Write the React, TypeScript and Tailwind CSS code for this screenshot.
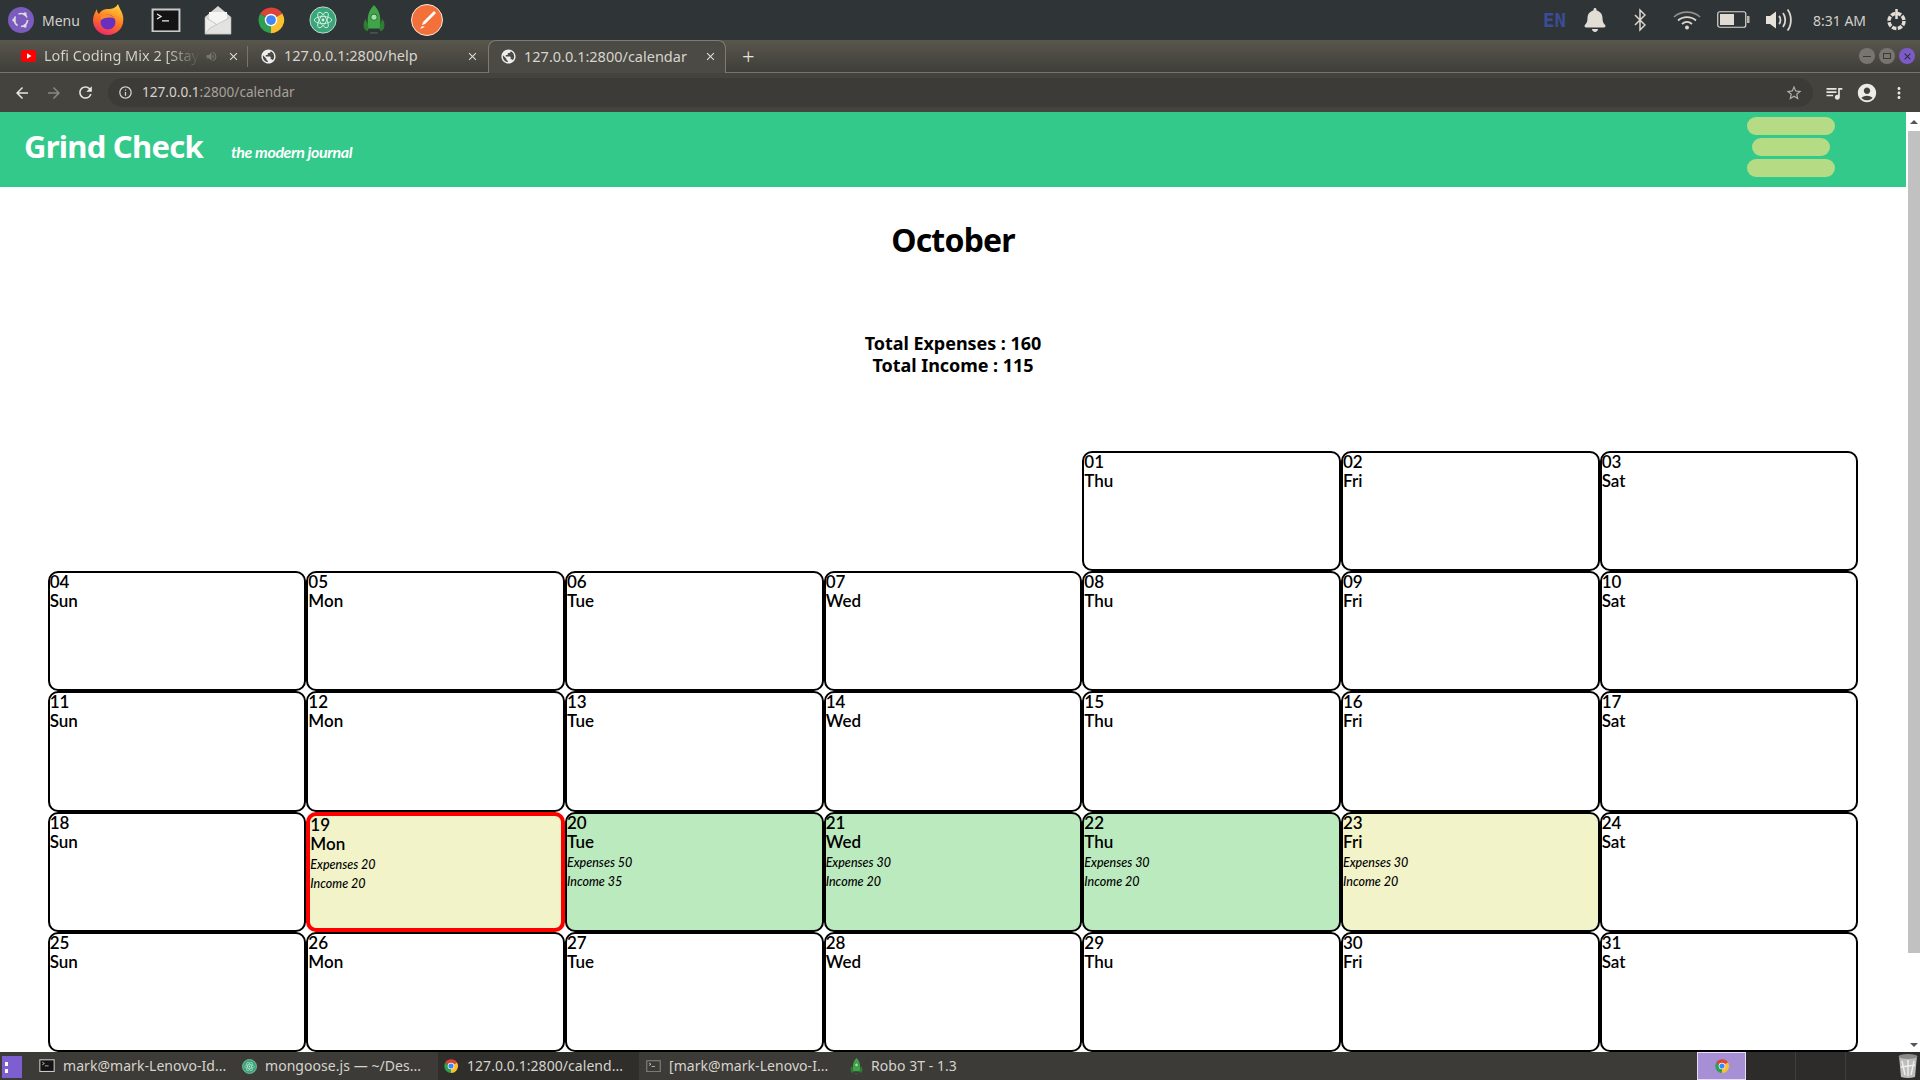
import React from 'react';
import { FaBell } from 'react-icons/fa';
import {
  MdAccountCircle,
  MdArrowBack,
  MdArrowForward,
  MdClose,
  MdInfoOutline,
  MdMoreVert,
  MdPublic,
  MdQueueMusic,
  MdRefresh,
  MdStarBorder,
  MdVolumeUp,
} from 'react-icons/md';

const Chrome: React.FC<{ size: number }> = ({ size }) => (
  <svg width={size} height={size} viewBox="0 0 48 48" className="shrink-0">
    <path d="M24 24 L6.5 14 A21 21 0 0 1 42.2 13.5 Z" fill="#db4437" />
    <path d="M24 24 L42.2 13.5 A21 21 0 0 1 24 45 Z" fill="#fbc02d" />
    <path d="M24 24 L24 45 A21 21 0 0 1 6.5 14 Z" fill="#2e9e4f" />
    <circle cx="24" cy="24" r="10" fill="#fff" />
    <circle cx="24" cy="24" r="7.8" fill="#4285f4" />
  </svg>
);

const Atom: React.FC<{ size: number }> = ({ size }) => (
  <svg width={size} height={size} viewBox="0 0 32 32" className="shrink-0">
    <circle cx="16" cy="16" r="15" fill="#3aa57a" stroke="#cfe8da" strokeWidth="1" />
    <g fill="none" stroke="#d6f3e2" strokeWidth="1">
      <ellipse cx="16" cy="16" rx="10" ry="4" />
      <ellipse cx="16" cy="16" rx="10" ry="4" transform="rotate(60 16 16)" />
      <ellipse cx="16" cy="16" rx="10" ry="4" transform="rotate(120 16 16)" />
    </g>
    <circle cx="16" cy="16" r="1.6" fill="#d6f3e2" />
  </svg>
);

const Rocket: React.FC<{ w: number; h: number }> = ({ w, h }) => (
  <svg width={w} height={h} viewBox="0 0 24 32" className="shrink-0">
    <path d="M3 15 C-1 21 1 27 5 28 L7 24 Z M21 15 C25 21 23 27 19 28 L17 24 Z" fill="#2f7d32" />
    <path d="M12 0 C6 6 4 13 6 25 L18 25 C20 13 18 6 12 0 Z" fill="#3fa548" />
    <circle cx="12" cy="13" r="3.4" fill="#a7dcae" stroke="#1f6b28" />
    <rect x="8" y="29" width="8" height="1.5" fill="#555" />
  </svg>
);

const Terminal: React.FC<{ size: number; dim?: boolean }> = ({ size, dim }) => (
  <svg width={size} height={size * 0.83} viewBox="0 0 30 25" className="shrink-0">
    <rect x="0.5" y="0.5" width="29" height="24" fill={dim ? '#8b8b88' : '#c9c9c9'} />
    <rect x="2.5" y="2.5" width="25" height="20" fill={dim ? '#3b3a36' : '#141414'} />
    <path d="M6 6 L10 8.5 L6 11 M11 13 H18" fill="none" stroke="#eee" strokeWidth="1.3" />
  </svg>
);

const Mail = () => (
  <svg width="28" height="30" viewBox="0 0 28 30">
    <path d="M1 12 L14 1 L27 12 V29 H1 Z" fill="#d8d8d6" />
    <path d="M5 14 L5 7 L23 7 L23 14 L14 20 Z" fill="#f5f5f3" />
    <path d="M1 12 L27 29 H1 Z" fill="#eeeeec" stroke="#b5b5b3" strokeWidth="0.6" />
    <path d="M27 12 L6 23 L1 29 H27 Z" fill="#e2e2e0" stroke="#b5b5b3" strokeWidth="0.6" />
  </svg>
);

const Firefox = () => (
  <svg width="31" height="32" viewBox="0 0 31 32">
    <defs>
      <linearGradient id="fx" x1="0.7" y1="0" x2="0.3" y2="1">
        <stop offset="0" stopColor="#ffd33d" />
        <stop offset="0.5" stopColor="#ff7a1f" />
        <stop offset="1" stopColor="#f0256a" />
      </linearGradient>
    </defs>
    <path d="M25 0 C26 4 29 7 30 12 C32 24 24 31 15 31 C6 31 0 24 0 16 C0 12 2 8 4 5 C4 8 5 9 6 10 C8 6 12 5 15 5 C19 5 23 4 25 0 Z" fill="url(#fx)" />
    <circle cx="15" cy="18" r="7.5" fill="#6b2fc0" />
    <path d="M8 12 C12 9 19 10 22 15 C18 13 13 13 8 16 Z" fill="#ff8a2a" />
  </svg>
);

const Postman = () => (
  <svg width="32" height="32" viewBox="0 0 32 32">
    <circle cx="16" cy="16" r="15.5" fill="#f4703a" stroke="#f6e8df" strokeWidth="1" />
    <path d="M23 7 L25 9 L14 20 L11 21 L12 18 Z M11 22 L14 23 L9 25 Z" fill="#fff" />
  </svg>
);

const UbuntuMenu = () => (
  <svg width="26" height="26" viewBox="0 0 26 26">
    <circle cx="13" cy="13" r="13" fill="#7c5bbe" />
    <circle cx="13" cy="13" r="6.5" fill="none" stroke="#ddd" strokeWidth="1.6" strokeDasharray="10 3.6" />
    <circle cx="6" cy="13" r="1.7" fill="#ddd" />
    <circle cx="17" cy="7" r="1.7" fill="#ddd" />
    <circle cx="17" cy="19" r="1.7" fill="#ddd" />
  </svg>
);

const Bluetooth = () => (
  <svg width="12" height="24" viewBox="0 0 12 24" fill="none" stroke="#dcd8d0" strokeWidth="1.5">
    <path d="M1 7 L11 17 L6 22 V2 L11 7 L1 17" />
  </svg>
);

const Wifi = () => (
  <svg width="28" height="20" viewBox="0 0 28 20" fill="none">
    <path d="M1 7 C8 0.5 20 0.5 27 7" stroke="#8f8f8b" strokeWidth="1.6" />
    <path d="M5 10.5 C10 6 18 6 23 10.5" stroke="#dcd8d0" strokeWidth="1.8" />
    <path d="M9 14 C12 11.5 16 11.5 19 14" stroke="#dcd8d0" strokeWidth="1.8" />
    <circle cx="14" cy="17.5" r="2" fill="#dcd8d0" />
  </svg>
);

const Speaker = () => (
  <svg width="28" height="24" viewBox="0 0 28 24" fill="none" stroke="#dcd8d0" strokeWidth="1.8">
    <path d="M1 8 H5 L11 3.5 V20.5 L5 16 H1 Z" fill="#e6e2da" stroke="none" />
    <path d="M14 8 C16 10 16 14 14 16" />
    <path d="M18 5 C21 9 21 15 18 19" />
    <path d="M22.5 1.5 C27 7 27 17 22.5 22.5" />
  </svg>
);

const Battery = () => (
  <svg width="33" height="18" viewBox="0 0 33 18">
    <rect x="0.75" y="0.75" width="28" height="15.5" rx="2" fill="none" stroke="#dcd8d0" strokeWidth="1.2" />
    <rect x="3" y="3" width="14" height="11" fill="#e0dcd4" />
    <rect x="30" y="5" width="2.5" height="7" fill="#b9b6af" />
  </svg>
);

const Gear = () => (
  <svg width="25" height="25" viewBox="0 0 25 25" fill="none" stroke="#e2ded6">
    <circle cx="12.5" cy="13" r="7.5" strokeWidth="3.5" strokeDasharray="4.5 1.4" />
    <path d="M12.5 1 V11" strokeWidth="2.5" />
  </svg>
);

const Trash = () => (
  <svg width="22" height="26" viewBox="0 0 22 26">
    <path d="M2 3 H20 L18 24 Q11 26 4 24 Z" fill="#bdbdb9" />
    <ellipse cx="11" cy="3.5" rx="9.5" ry="2.5" fill="#8a8a86" />
    <path d="M5 8 L8 22 M11 7 V23 M17 8 L14 22 M4 14 L18 12" stroke="#efefec" strokeWidth="1.4" />
  </svg>
);

const TopBar = () => (
  <div className="flex h-10 shrink-0 items-center bg-[#2f3437] text-[#dcd8d0]">
    <div className="ml-2"><UbuntuMenu /></div>
    <span className="ml-2 w-[44px] text-[14px] text-[#d3d0ca]">Menu</span>
    <div className="ml-[7px]"><Firefox /></div>
    <div className="ml-[27px]"><Terminal size={30} /></div>
    <div className="ml-[23px]"><Mail /></div>
    <div className="ml-[24px]"><Chrome size={30} /></div>
    <div className="ml-[23px]"><Atom size={28} /></div>
    <div className="ml-[25px]"><Rocket w={24} h={30} /></div>
    <div className="ml-[25px]"><Postman /></div>
    <span className="ml-auto w-[24px] font-['DejaVu_Sans_Mono',monospace] text-[19px] leading-none font-bold text-[#3c4c96]">EN</span>
    <div className="ml-[16px]"><FaBell size={24} color="#e2ded6" /></div>
    <div className="ml-[27px]"><Bluetooth /></div>
    <div className="ml-[27px]"><Wifi /></div>
    <div className="ml-[16px] flex"><Battery /></div>
    <div className="ml-[15px]"><Speaker /></div>
    <span className="ml-[20px] w-[56px] text-[14px] whitespace-nowrap text-[#d3d0ca]">8:31 AM</span>
    <div className="mr-[11px] ml-[15px]"><Gear /></div>
  </div>
);

const Tab: React.FC<{ title: string; icon: React.ReactNode; width: string; active?: boolean }> = ({ title, icon, width, active }) => (
  <div className={`flex h-[33px] shrink-0 items-center ${width} ${active ? 'rounded-t-lg border border-b-0 border-[#7d7b74] bg-[#4c4a45]' : ''}`}>
    {icon}
    <span className="ml-[7px] min-w-0 flex-1 overflow-hidden text-[14.5px] whitespace-nowrap text-[#d6d4ce]">{title}</span>
    <MdClose size={13} color="#e0ded8" className="mr-[8px] ml-2 shrink-0" />
  </div>
);

const MediaTab = () => (
  <div className="flex h-[33px] w-[247px] shrink-0 items-center pl-[21px]">
    <svg width="15" height="12" viewBox="0 0 15 12" className="shrink-0">
      <rect width="15" height="12" rx="3" fill="#f00" />
      <path d="M6 3.2 L10.5 6 L6 8.8 Z" fill="#fff" />
    </svg>
    <span className="ml-[8px] w-[156px] shrink-0 overflow-hidden bg-gradient-to-r from-[#d6d4ce] from-78% to-transparent bg-clip-text text-[14.5px] whitespace-nowrap text-transparent">
      Lofi Coding Mix 2 [Stay
    </span>
    <MdVolumeUp size={13} color="#77756f" className="ml-[5px] shrink-0" />
    <MdClose size={13} color="#e0ded8" className="ml-[9px] shrink-0" />
  </div>
);

const TabStrip = () => (
  <div className="flex h-[33px] shrink-0 items-center border-b border-[#77756e] bg-gradient-to-b from-[#59564d] to-[#3f3e39]">
    <MediaTab />
    <div className="h-[21px] w-px bg-[#77756e]" />
    <Tab width="w-[239px] pl-[12px]" title="127.0.0.1:2800/help" icon={<MdPublic size={17} color="#eee" className="shrink-0" />} />
    <div className="w-px" />
    <Tab active width="w-[238px] pl-[11px]" title="127.0.0.1:2800/calendar" icon={<MdPublic size={17} color="#eee" className="shrink-0" />} />
    <span className="ml-[16px] text-[22px] leading-none font-light text-[#e6e4de]">+</span>
    <div className="mr-[5px] ml-auto flex gap-[4px]">
      <div className="flex h-4 w-4 items-center justify-center rounded-full bg-[#76756f]"><div className="h-px w-2 bg-[#3a3936]" /></div>
      <div className="flex h-4 w-4 items-center justify-center rounded-full bg-[#76756f]"><div className="h-[6px] w-2 border border-[#3a3936]" /></div>
      <div className="flex h-4 w-4 items-center justify-center rounded-full bg-[#7c5bc9]"><MdClose size={11} color="#2d2b33" /></div>
    </div>
  </div>
);

const Toolbar = () => (
  <div className="flex h-[39px] shrink-0 items-center bg-[#45433e]">
    <MdArrowBack size={18} color="#e8e6e0" className="ml-[13px]" />
    <MdArrowForward size={18} color="#8a8882" className="ml-[14px]" />
    <MdRefresh size={19} color="#e8e6e0" className="ml-[13px]" />
    <div className="ml-[13px] flex h-[29px] flex-1 items-center rounded-full bg-[#3d3b37]">
      <MdInfoOutline size={15} color="#d8d6d0" className="ml-[10px]" />
      <span className="ml-[9px] text-[13.6px] text-[#d6d4ce]">127.0.0.1<span className="text-[#a4a29c]">:2800/calendar</span></span>
      <MdStarBorder size={18} color="#b0aea8" className="mr-[10px] ml-auto" />
    </div>
    <MdQueueMusic size={20} color="#e8e6e0" className="ml-[11px]" />
    <MdAccountCircle size={22} color="#eeece6" className="ml-[12px]" />
    <MdMoreVert size={18} color="#e8e6e0" className="mr-[12px] ml-[12px]" />
  </div>
);

type Day = { n: string; d: string; tone?: 'green' | 'yellow' | 'today'; exp?: number; inc?: number };

const names = ['Sun', 'Mon', 'Tue', 'Wed', 'Thu', 'Fri', 'Sat'];
const extras: Record<number, Partial<Day>> = {
  19: { tone: 'today', exp: 20, inc: 20 },
  20: { tone: 'green', exp: 50, inc: 35 },
  21: { tone: 'green', exp: 30, inc: 20 },
  22: { tone: 'green', exp: 30, inc: 20 },
  23: { tone: 'yellow', exp: 30, inc: 20 },
};
const days: Day[] = Array.from({ length: 31 }, (_, i) => ({
  n: String(i + 1).padStart(2, '0'),
  d: names[(i + 4) % 7],
  ...extras[i + 1],
}));

const toneClass = {
  green: 'bg-[#bbeabf] border-2 border-black',
  yellow: 'bg-[#f2f3c8] border-2 border-black',
  today: 'bg-[#f2f3c8] border-4 border-[#ff0000]',
};

const DayCell: React.FC<{ day: Day; first: boolean }> = ({ day, first }) => (
  <div
    className={`h-[120.2px] rounded-[10px] text-[17px] leading-[19px] font-semibold text-black ${day.tone ? toneClass[day.tone] : 'border-2 border-black bg-white'} ${first ? 'col-start-5' : ''}`}
  >
    <div className="mt-[-1px]">{day.n}</div>
    <div>{day.d}</div>
    {day.exp !== undefined && (
      <div className="mt-[2px] text-[12.5px] leading-[19px] font-medium italic">
        <div>Expenses {day.exp}</div>
        <div>Income {day.inc}</div>
      </div>
    )}
  </div>
);

const Page = () => (
  <div className="min-w-0 flex-1 overflow-hidden bg-white font-['Noto_Sans',sans-serif]">
    <header className="flex h-[75px] items-center bg-[#32c98a] text-white">
      <span className="mb-[7px] ml-[24px] text-[31px] leading-none font-bold tracking-[-0.75px]">Grind Check</span>
      <span className="mt-[4px] ml-[28px] font-['Lato',sans-serif] text-[16px] font-bold italic tracking-[-0.4px]">the modern journal</span>
      <div className="mr-[71px] mb-[5px] ml-auto flex w-[88px] flex-col items-center gap-[3px]">
        <div className="h-[18px] w-[88px] rounded-full bg-[#b5dc85]" />
        <div className="h-[18px] w-[78px] rounded-full bg-[#b5dc85]" />
        <div className="h-[18px] w-[88px] rounded-full bg-[#b5dc85]" />
      </div>
    </header>
    <h1 className="mt-[31px] text-center text-[32px] leading-[44px] font-bold tracking-[-0.8px] text-black">October</h1>
    <div className="mt-[70px] text-center text-[18px] leading-[22px] font-bold tracking-[-0.05px] text-black">
      <div>Total Expenses : 160</div>
      <div>Total Income : 115</div>
    </div>
    <div className="mt-[75px] ml-[47.65px] grid w-[1810.7px] grid-cols-7 font-['Lato',sans-serif]">
      {days.map((day, i) => (
        <DayCell key={day.n} day={day} first={i === 0} />
      ))}
    </div>
  </div>
);

const Scrollbar = () => (
  <div className="flex w-[14px] shrink-0 flex-col bg-white pl-[2px]">
    <div className="flex h-[19px] items-center justify-center"><div className="h-0 w-0 border-x-[4px] border-b-[4px] border-x-transparent border-b-[#555]" /></div>
    <div className="h-[822px] bg-[#c1c1c1]" />
    <div className="flex flex-1 items-end justify-center pb-[5px]"><div className="h-0 w-0 border-x-[4px] border-t-[4px] border-x-transparent border-t-[#555]" /></div>
  </div>
);

const TaskItem: React.FC<{ icon: React.ReactNode; label: string; cls: string; active?: boolean }> = ({ icon, label, cls, active }) => (
  <div className={`flex h-full shrink-0 items-center ${cls} ${active ? 'bg-[#2f2e2b]' : ''}`}>
    {icon}
    <span className="mb-px ml-[8px] text-[14px] tracking-[0.05px] whitespace-nowrap text-[#d6d4ce]">{label}</span>
  </div>
);

const Taskbar = () => (
  <div className="flex h-[28px] shrink-0 items-center bg-[#3c3b37] font-['Noto_Sans',sans-serif]">
    <div className="mt-[2px] ml-[2px] flex h-[22px] w-[20px] flex-col justify-center gap-[3px] bg-[#7e5fd0] pl-[3px]">
      <div className="h-[4px] w-[3px] bg-white" />
      <div className="h-[4px] w-[3px] bg-white" />
    </div>
    <TaskItem cls="w-[220px] pl-[17px]" icon={<Terminal size={16} />} label="mark@mark-Lenovo-Id..." />
    <TaskItem cls="w-[196px]" icon={<Atom size={15} />} label="mongoose.js — ~/Des..." />
    <TaskItem active cls="w-[201px] pl-[5px]" icon={<Chrome size={16} />} label="127.0.0.1:2800/calend..." />
    <TaskItem cls="w-[211px] pl-[7px]" icon={<Terminal size={15} dim />} label="[mark@mark-Lenovo-I..." />
    <TaskItem cls="w-[120px]" icon={<Rocket w={13} h={17} />} label="Robo 3T - 1.3" />
    <div className="ml-auto flex h-full items-stretch">
      <div className="flex w-[49px] items-center justify-center border border-[#e6dff3] bg-[#a78fd6]"><Chrome size={16} /></div>
      <div className="w-[50px] border-r border-[#3f3e3a] bg-[#2d2c2a]" />
      <div className="w-[50px] border-r border-[#3f3e3a] bg-[#2d2c2a]" />
      <div className="w-[50px] bg-[#2d2c2a]" />
      <div className="flex w-[24px] items-center justify-center bg-[#2d2c2a]"><Trash /></div>
    </div>
  </div>
);

export default function App() {
  return (
    <div className="flex h-screen w-full flex-col overflow-hidden font-['Noto_Sans',sans-serif]">
      <TopBar />
      <TabStrip />
      <Toolbar />
      <div className="flex min-h-0 flex-1">
        <Page />
        <Scrollbar />
      </div>
      <Taskbar />
    </div>
  );
}
